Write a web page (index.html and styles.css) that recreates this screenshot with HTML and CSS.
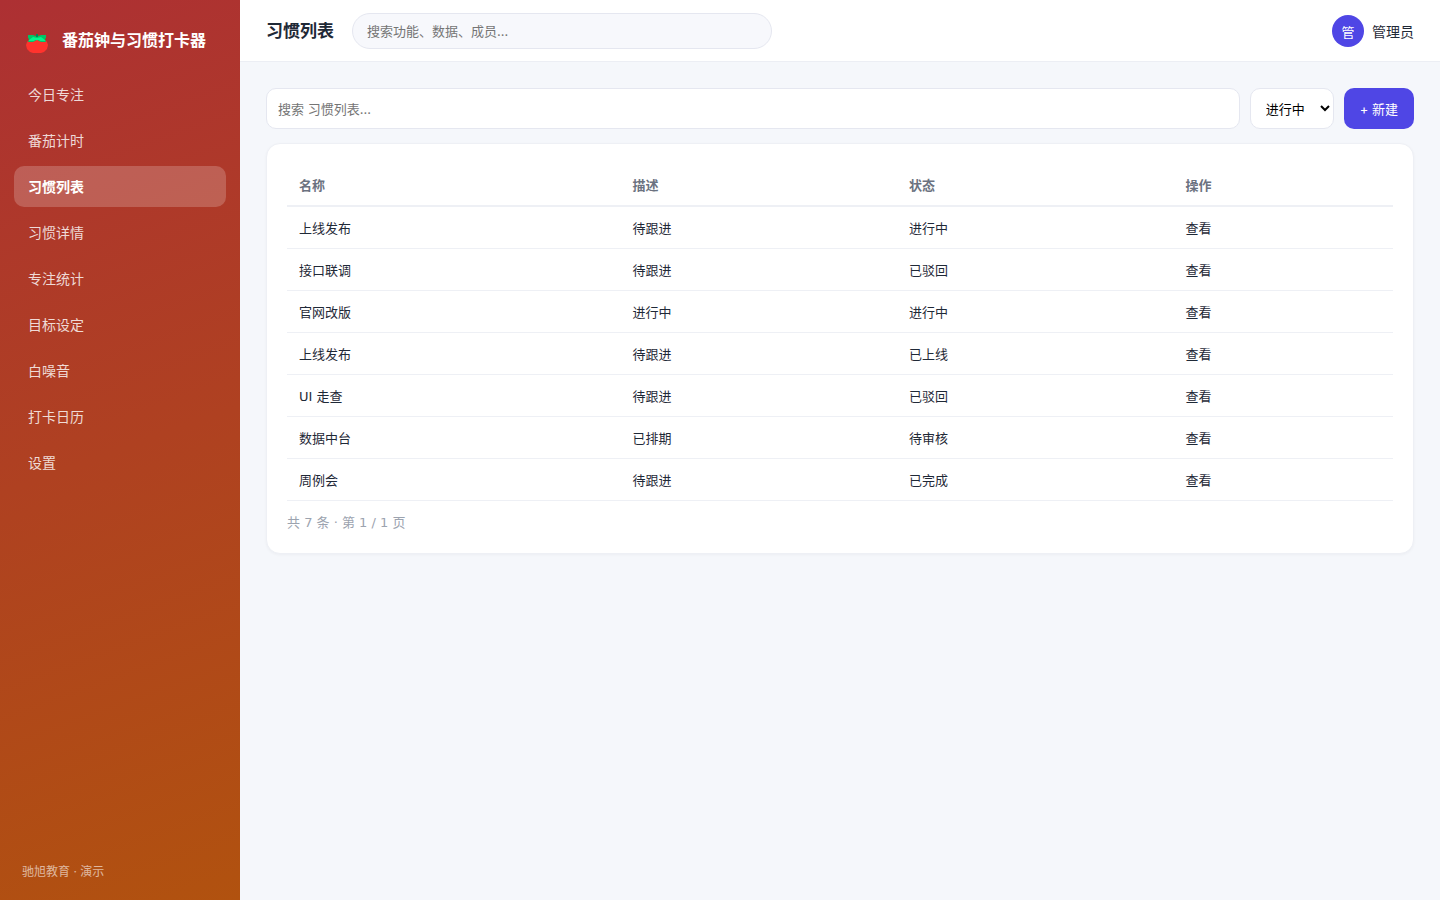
FILE: index.html
```html
<!DOCTYPE html>
<html lang="zh-CN">
<head>
  <meta charset="UTF-8" />
  <meta name="viewport" content="width=device-width, initial-scale=1.0"/>
  <title>番茄钟与习惯打卡器</title>
  <link rel="stylesheet" href="styles.css">
</head>
<body>
  <div class="app">
    <aside class="sidebar">
      <div class="brand">
        <svg class="logo" viewBox="0 0 24 22" aria-hidden="true">
          <path fill="#ff332d" d="M5 7h14l3 3 1 3-1 4-3 3-3 1H8l-3-1-3-3-1-4 1-3z"/>
          <path fill="#00c565" d="M3 3h5l3 1 1-1 1 1 3-1h5v3l-1 1 1 3h-5l-4-2-4 2H3l1-3-1-1z"/>
          <path fill="#00f48e" d="M8 5l4 1 4-1 4 3v1h-5l-1-1h-4L9 9H4V8z"/>
          <path fill="#008858" d="M11 2h2v3h-2z"/>
        </svg>
        <span>番茄钟与习惯打卡器</span>
      </div>
      <nav class="menu">
        <a href="#">今日专注</a>
        <a href="#">番茄计时</a>
        <a href="#" class="active">习惯列表</a>
        <a href="#">习惯详情</a>
        <a href="#">专注统计</a>
        <a href="#">目标设定</a>
        <a href="#">白噪音</a>
        <a href="#">打卡日历</a>
        <a href="#">设置</a>
      </nav>
      <div class="side-foot">驰旭教育 · 演示</div>
    </aside>

    <div class="main">
      <header class="topbar">
        <h1>习惯列表</h1>
        <input type="search" class="global-search" placeholder="搜索功能、数据、成员…" aria-label="全局搜索" />
        <div class="user">
          <span class="avatar">管</span>
          <span>管理员</span>
        </div>
      </header>

      <main class="content">
        <div class="toolbar">
          <input type="text" class="filter" placeholder="搜索 习惯列表..." aria-label="搜索习惯列表" />
          <select class="status" aria-label="状态">
            <option>进行中</option>
            <option>已完成</option>
          </select>
          <button type="button" class="btn">+ 新建</button>
        </div>

        <section class="card">
          <table>
            <thead>
              <tr><th>名称</th><th>描述</th><th>状态</th><th>操作</th></tr>
            </thead>
            <tbody>
              <tr><td>上线发布</td><td>待跟进</td><td>进行中</td><td><a href="#">查看</a></td></tr>
              <tr><td>接口联调</td><td>待跟进</td><td>已驳回</td><td><a href="#">查看</a></td></tr>
              <tr><td>官网改版</td><td>进行中</td><td>进行中</td><td><a href="#">查看</a></td></tr>
              <tr><td>上线发布</td><td>待跟进</td><td>已上线</td><td><a href="#">查看</a></td></tr>
              <tr><td>UI 走查</td><td>待跟进</td><td>已驳回</td><td><a href="#">查看</a></td></tr>
              <tr><td>数据中台</td><td>已排期</td><td>待审核</td><td><a href="#">查看</a></td></tr>
              <tr><td>周例会</td><td>待跟进</td><td>已完成</td><td><a href="#">查看</a></td></tr>
            </tbody>
          </table>
          <div class="pager">共 7 条 · 第 1 / 1 页</div>
        </section>
      </main>
    </div>
  </div>
</body>
</html>
```
FILE: styles.css
```css
* {
  box-sizing: border-box;
}
body {
  margin: 0;
  font-family: Inter, "Noto Sans CJK SC", sans-serif;
  font-size: 14px;
  color: #1f2937;
  background: #f5f7fb;
}
a {
  color: inherit;
  text-decoration: none;
}
input, select, button {
  font-family: inherit;
  font-size: 13px;
}
.app {
  display: flex;
  min-height: 100vh;
}
.sidebar {
  width: 240px;
  flex-shrink: 0;
  display: flex;
  flex-direction: column;
  padding: 22px 14px 20px;
  color: #fff;
  background: linear-gradient(160deg, #ad3033, #b1520f);
}
.brand {
  display: flex;
  align-items: center;
  gap: 13px;
  padding: 4px 11px;
  margin-bottom: 16px;
  font-size: 16px;
  line-height: 26px;
  font-weight: 700;
}
.logo {
  width: 24px;
  height: 22px;
  margin-top: 6px;
}
.menu {
  display: flex;
  flex-direction: column;
  gap: 5px;
}
.menu a {
  padding: 11px 14px 10px;
  line-height: 20px;
  border-radius: 10px;
  color: rgba(255, 255, 255, 0.82);
}
.menu a.active {
  background: rgba(255, 255, 255, 0.2);
  color: #fff;
  font-weight: 700;
}
.side-foot {
  margin-top: auto;
  padding: 0 8px;
  font-size: 12px;
  line-height: 16px;
  color: rgba(255, 255, 255, 0.6);
}
.main {
  flex: 1;
  min-width: 0;
}
.topbar {
  display: flex;
  align-items: center;
  gap: 18px;
  padding: 13px 26px 12px;
  background: #fff;
  border-bottom: 1px solid #eceef4;
}
.topbar h1 {
  margin: 0;
  font-size: 17px;
  line-height: 26px;
}
.global-search {
  width: 420px;
  height: 36px;
  padding: 0 14px;
  border: 1px solid #e5e7f0;
  border-radius: 18px;
  background: #f7f8fc;
}
.user {
  display: flex;
  align-items: center;
  gap: 8px;
  margin-left: auto;
}
.avatar {
  width: 32px;
  height: 32px;
  border-radius: 50%;
  display: flex;
  align-items: center;
  justify-content: center;
  background: #4f46e5;
  color: #fff;
  font-size: 13px;
}
.content {
  padding: 26px;
}
.toolbar {
  display: flex;
  gap: 10px;
  margin-bottom: 14px;
}
.filter, .status {
  height: 41px;
  padding: 0 11px;
  border: 1px solid #e5e7f0;
  border-radius: 10px;
  background: #fff;
}
.filter {
  flex: 1;
}
.btn {
  padding: 0 16px;
  border: none;
  border-radius: 10px;
  background: #4f46e5;
  color: #fff;
  cursor: pointer;
}
.card {
  padding: 20px;
  border: 1px solid #eef0f5;
  border-radius: 14px;
  background: #fff;
  box-shadow: 0 1px 3px rgba(16, 24, 40, 0.04);
  font-family: "DejaVu Sans", "Noto Sans CJK SC", sans-serif;
}
table {
  width: 100%;
  border-collapse: collapse;
  font-size: 13px;
  line-height: 19px;
}
th, td {
  padding: 12px 12px 10px;
  text-align: left;
  border-bottom: 1px solid #eef0f5;
}
th {
  color: #6b7280;
  font-weight: 600;
  border-bottom-width: 2px;
}
.pager {
  margin-top: 12px;
  font-size: 13px;
  line-height: 20px;
  color: #9ca3af;
}
```
